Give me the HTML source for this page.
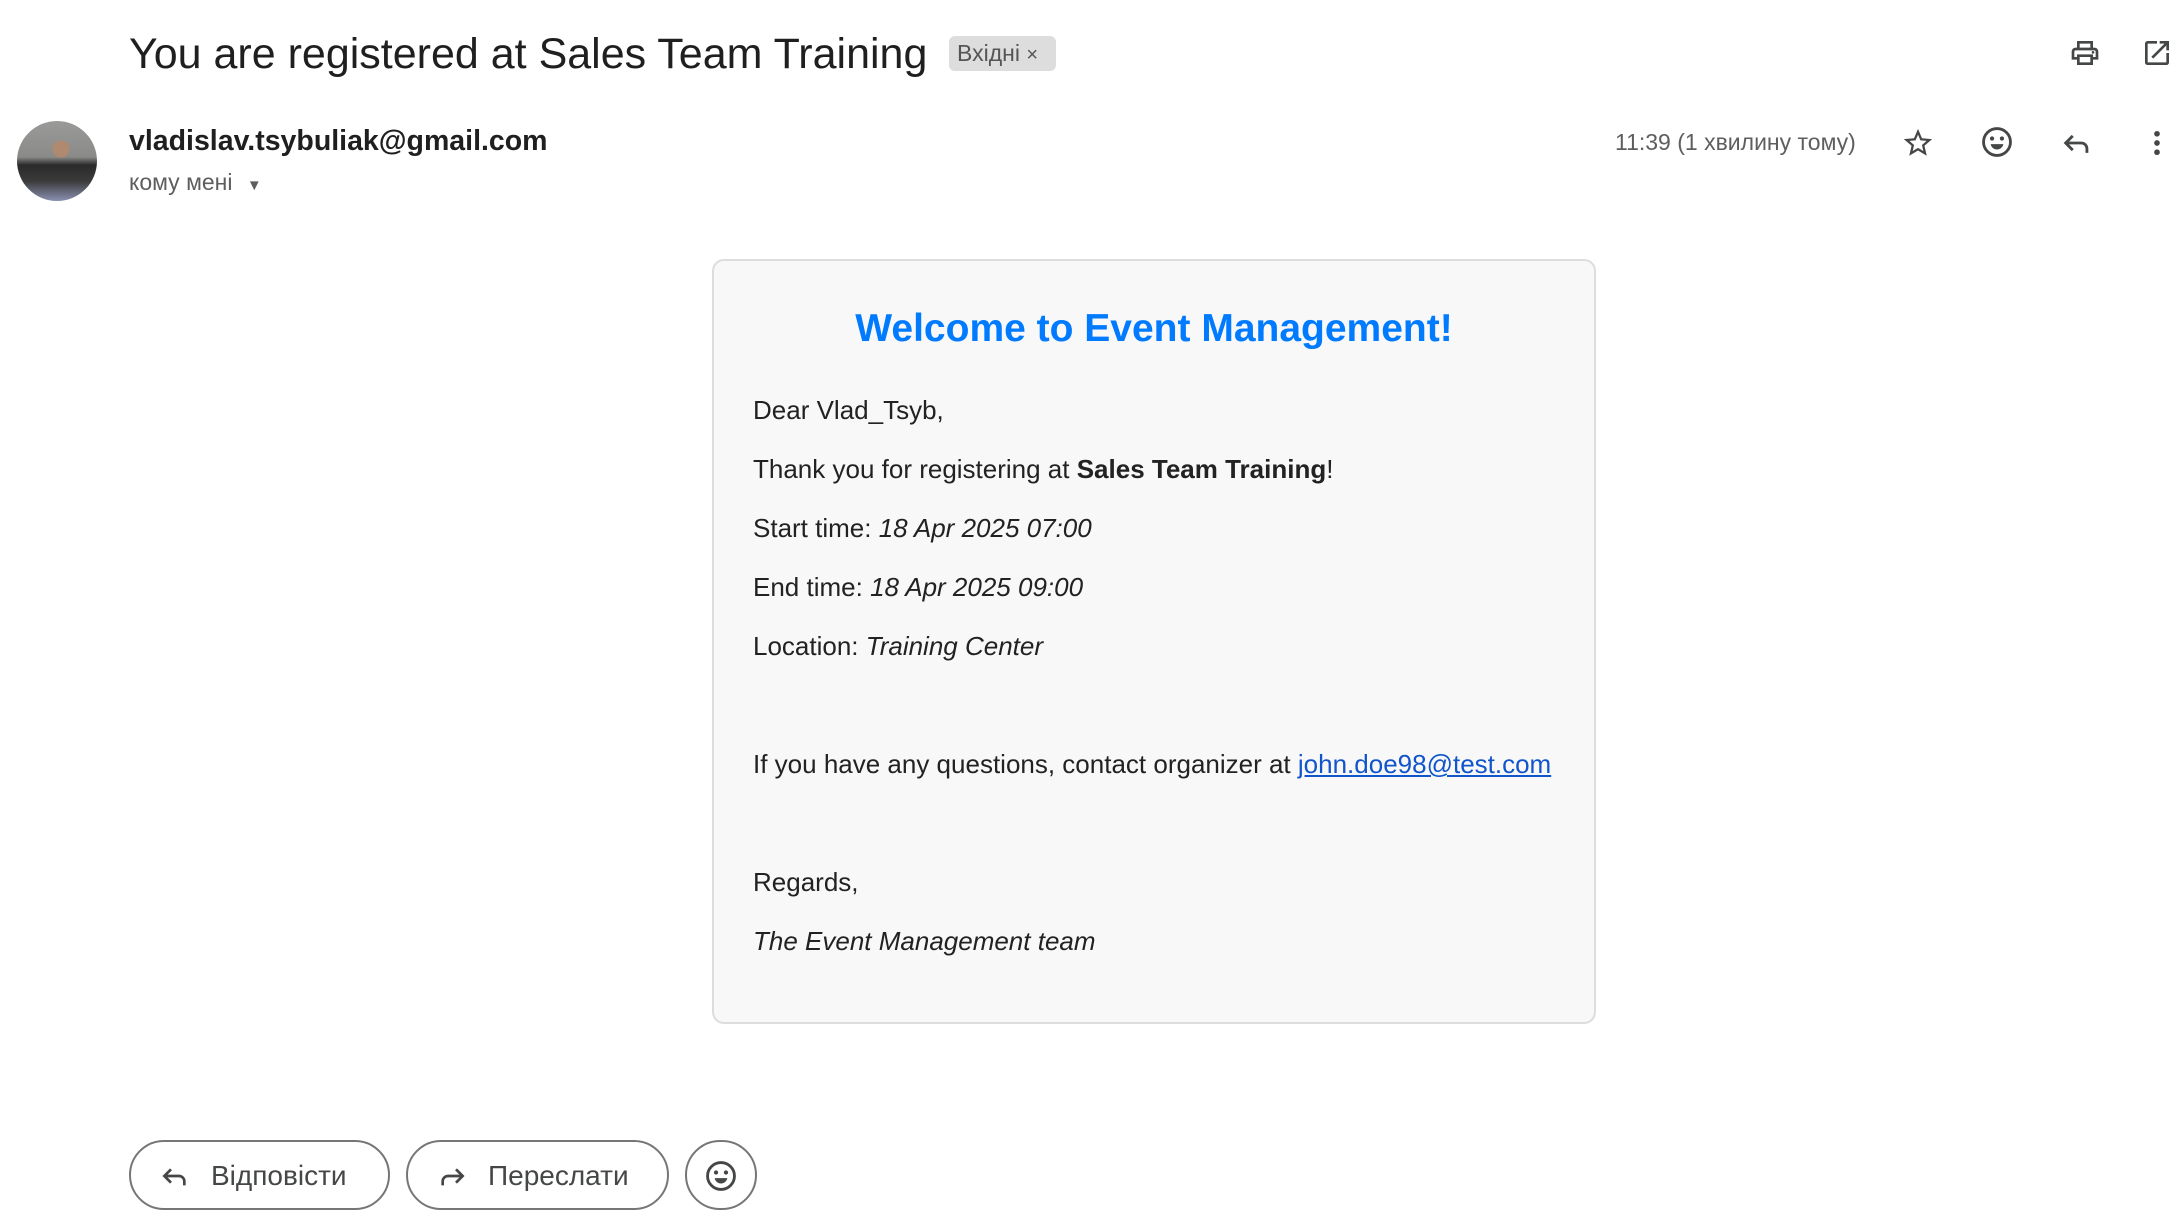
<!DOCTYPE html>
<html><head><meta charset="utf-8"><style>
html,body{margin:0;padding:0;background:#fff;width:2179px;height:1229px;overflow:hidden;font-family:"Liberation Sans","Noto Sans CJK SC",sans-serif;color:#1f1f1f;position:relative}
.a{position:absolute;white-space:nowrap}
svg{position:absolute}
.card{position:absolute;left:712px;top:259px;width:880px;height:761px;background:#f8f8f8;border:2px solid #ddd;border-radius:12px}
.p{position:absolute;left:753px;font-size:26px;color:#222;line-height:30px;white-space:nowrap}
.btn{position:absolute;top:1140px;height:70px;border:2px solid #747775;border-radius:36px;box-sizing:border-box;font-size:28px;color:#444746}
</style></head><body>
<div class="a" style="left:129px;top:30px;font-size:43px;letter-spacing:0px;color:#1f1f1f">You are registered at Sales Team Training</div>
<div class="a" style="left:949px;top:36px;width:107px;height:35px;background:#ddd;border-radius:6px;font-size:23px;color:#555;line-height:35px;text-indent:8px">Вхідні <span style="font-size:20px">×</span></div>
<svg style="left:2069px;top:37px" width="32" height="32" viewBox="0 0 24 24"><path fill="#444746" d="M19 8h-1V3H6v5H5c-1.66 0-3 1.34-3 3v6h4v4h12v-4h4v-6c0-1.66-1.34-3-3-3zM8 5h8v3H8V5zm8 14H8v-4h8v4zm4-4h-2v-2H6v2H4v-4c0-.55.45-1 1-1h14c.55 0 1 .45 1 1v4z"/><circle cx="18" cy="11.5" r="1" fill="#444746"/></svg>
<svg style="left:2141px;top:37px" width="32" height="32" viewBox="0 0 24 24"><path fill="#444746" d="M19 19H5V5h7V3H5a2 2 0 0 0-2 2v14a2 2 0 0 0 2 2h14c1.1 0 2-.9 2-2v-7h-2v7zM14 3v2h3.59l-9.83 9.83 1.41 1.41L19 6.41V10h2V3h-7z"/></svg>
<div class="a" style="left:17px;top:121px;width:80px;height:80px;border-radius:50%;background:radial-gradient(circle at 55% 35%,#b08a70 0 12%,transparent 13%),linear-gradient(180deg,#9a9a98 0%,#8a8a88 45%,#2a2a2a 55%,#3a3a3a 75%,#8a90b0 100%);overflow:hidden"></div>
<div class="a" style="left:129px;top:125px;font-size:28.5px;font-weight:bold;color:#1f1f1f">vladislav.tsybuliak@gmail.com</div>
<div class="a" style="left:129px;top:169px;font-size:23px;color:#5e5e5e">кому мені <span style="font-size:15px;margin-left:8px">▼</span></div>
<div class="a" style="left:1615px;top:129px;font-size:23px;color:#5e5e5e">11:39 (1 хвилину тому)</div>
<svg style="left:1901px;top:126px" width="34" height="34" viewBox="0 0 24 24"><path fill="#444746" d="M22 9.24l-7.19-.62L12 2 9.19 8.63 2 9.24l5.46 4.73L5.82 21 12 17.27 18.18 21l-1.63-7.03L22 9.24zM12 15.4l-3.76 2.27 1-4.28-3.32-2.88 4.38-.38L12 6.1l1.71 4.04 4.38.38-3.32 2.88 1 4.28L12 15.4z"/></svg>
<svg style="left:1980px;top:125px" width="34" height="34" viewBox="0 0 24 24"><circle cx="12" cy="12" r="9.5" fill="none" stroke="#444746" stroke-width="2"/><circle cx="8.5" cy="9.5" r="1.5" fill="#444746"/><circle cx="15.5" cy="9.5" r="1.5" fill="#444746"/><path fill="#444746" d="M7.5 13.5h9c-.5 2.3-2.3 3.8-4.5 3.8s-4-1.5-4.5-3.8z"/></svg>
<svg style="left:2060px;top:126px" width="34" height="34" viewBox="0 0 24 24"><path fill="none" stroke="#444746" stroke-width="2" d="M9 7l-5 5 5 5M4 12h11a4 4 0 0 1 4 4v3"/></svg>
<svg style="left:2140px;top:126px" width="34" height="34" viewBox="0 0 24 24"><circle cx="12" cy="5.5" r="2" fill="#444746"/><circle cx="12" cy="12" r="2" fill="#444746"/><circle cx="12" cy="18.5" r="2" fill="#444746"/></svg>

<div class="card"></div>
<div class="a" style="left:712px;width:884px;text-align:center;top:307px;font-size:39px;font-weight:bold;color:#007bff">Welcome to Event Management!</div>
<div class="p" style="top:395px">Dear Vlad_Tsyb,</div>
<div class="p" style="top:454px">Thank you for registering at <b>Sales Team Training</b>!</div>
<div class="p" style="top:513px">Start time: <i>18 Apr 2025 07:00</i></div>
<div class="p" style="top:572px">End time: <i>18 Apr 2025 09:00</i></div>
<div class="p" style="top:631px">Location: <i>Training Center</i></div>
<div class="p" style="top:749px">If you have any questions, contact organizer at <span style="color:#1155cc;text-decoration:underline">john.doe98@test.com</span></div>
<div class="p" style="top:867px">Regards,</div>
<div class="p" style="top:926px"><i>The Event Management team</i></div>

<div class="btn" style="left:129px;width:261px"><svg style="left:28px;top:18px" width="32" height="32" viewBox="0 0 24 24"><path fill="none" stroke="#444746" stroke-width="2" d="M9 7l-5 5 5 5M4 12h11a4 4 0 0 1 4 4v3"/></svg><span class="a" style="left:80px;top:18px">Відповісти</span></div>
<div class="btn" style="left:406px;width:263px"><svg style="left:28px;top:18px" width="32" height="32" viewBox="0 0 24 24"><path fill="none" stroke="#444746" stroke-width="2" d="M15 7l5 5-5 5M20 12H9a4 4 0 0 0-4 4v3"/></svg><span class="a" style="left:80px;top:18px">Переслати</span></div>
<div class="btn" style="left:685px;width:72px"><svg style="left:17px;top:17px" width="34" height="34" viewBox="0 0 24 24"><circle cx="12" cy="12" r="9.5" fill="none" stroke="#444746" stroke-width="2"/><circle cx="8.5" cy="9.5" r="1.5" fill="#444746"/><circle cx="15.5" cy="9.5" r="1.5" fill="#444746"/><path fill="#444746" d="M7.5 13.5h9c-.5 2.3-2.3 3.8-4.5 3.8s-4-1.5-4.5-3.8z"/></svg></div>
</body></html>
